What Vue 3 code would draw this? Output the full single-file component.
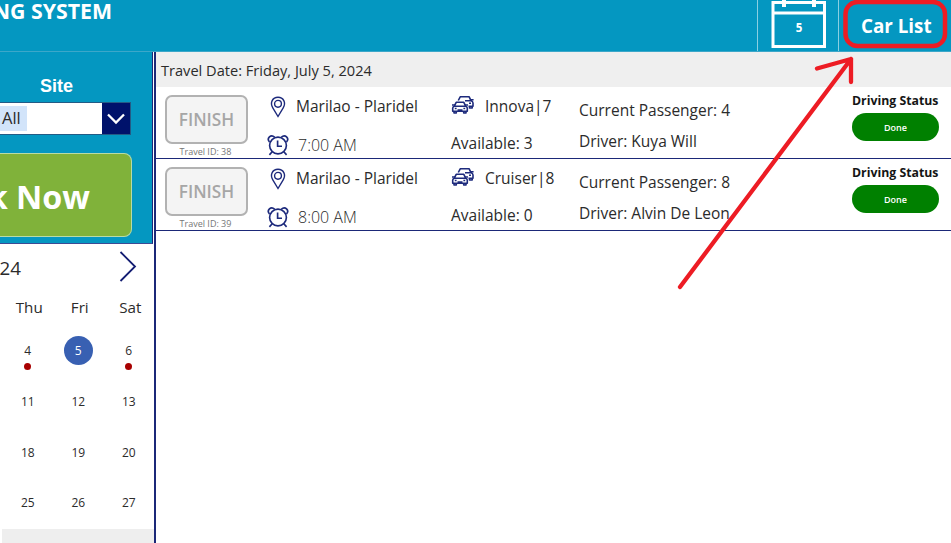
<script setup>
const trips = [
  { id: 38, route: 'Marilao - Plaridel', time: '7:00 AM', car: 'Innova|7', available: 3, passengers: 4, driver: 'Kuya Will' },
  { id: 39, route: 'Marilao - Plaridel', time: '8:00 AM', car: 'Cruiser|8', available: 0, passengers: 8, driver: 'Alvin De Leon' },
]
const weekdays = ['Thu', 'Fri', 'Sat']
const weeks = [[4, 5, 6], [11, 12, 13], [18, 19, 20], [25, 26, 27]]
const marked = [4, 6]
</script>

<template>
  <div class="screen">
    <header class="topbar">
      <h1 class="title">NG SYSTEM</h1>
      <div class="calendar-tab">
        <svg class="calendar-icon" width="56" height="50" viewBox="0 0 56 50">
          <path d="M2 2.500H53.500V46.500H2ZM2 13H53.500" fill="none" stroke="#fff" stroke-width="3" />
          <path d="M13 0V7M43 0V7" stroke="#fff" stroke-width="4" />
        </svg>
        <span class="calendar-day">5</span>
      </div>
      <div class="car-list"><span class="car-list-text">Car List</span></div>
    </header>

    <div class="content">
      <aside class="sidebar">
        <section class="booking">
          <div class="site-label">Site</div>
          <div class="select">
            <div class="select-value"><span class="chip">All</span></div>
            <div class="select-arrow">
              <svg width="20" height="12" viewBox="0 0 20 12"><path d="M2 1.500L10 9.500L18 1.500" fill="none" stroke="#fff" stroke-width="2.300" /></svg>
            </div>
          </div>
          <div class="book"><span class="book-text">k Now</span></div>
        </section>
        <section class="calendar">
          <div class="month">
            <span class="month-text">24</span>
            <svg class="next" width="18" height="32" viewBox="0 0 18 32"><path d="M1.500 2L16 16.500L1.500 31" fill="none" stroke="#131d72" stroke-width="1.800" /></svg>
          </div>
          <div class="weekdays"><span v-for="d in weekdays" :key="d">{{ d }}</span></div>
          <div v-for="(week, i) in weeks" :key="i" class="week">
            <div v-for="d in week" :key="d" class="day">
              <span class="num" :class="{ selected: d === 5 }">{{ d }}</span>
              <i v-if="marked.includes(d)" class="dot"></i>
            </div>
          </div>
          <div class="calendar-end"></div>
        </section>
      </aside>

      <main class="main">
        <div class="date-bar"><span class="date-text">Travel Date: Friday, July 5, 2024</span></div>
        <article v-for="t in trips" :key="t.id" class="trip">
          <div class="finish-col">
            <div class="finish"><span class="finish-text">FINISH</span></div>
            <span class="travel-id">Travel ID: {{ t.id }}</span>
          </div>
          <div class="route-col">
            <div class="line first">
              <svg class="icon" width="22" height="22" viewBox="0 0 22 22" fill="none" stroke="#1d2a7c" stroke-width="1.400">
                <path d="M11 20.500L5.800 11.800C2.700 6.700 5.500 1.200 11 1.200S19.300 6.700 16.200 11.800Z" />
                <circle cx="11" cy="7.800" r="3.400" />
              </svg>
              <span class="route">{{ t.route }}</span>
            </div>
            <div class="line second">
              <svg class="icon clock" width="22" height="22" viewBox="0 0 22 22" fill="none" stroke="#1d2a7c" stroke-width="1.650">
                <circle cx="11" cy="11.500" r="8.400" />
                <path d="M10.600 6.500V12.200H15M5.200 17.800L2.400 20.900M16.800 17.800L19.600 20.900" />
                <path d="M2.500 8C-.8 4.400 3.900-.3 7.600 3.100M19.500 8C22.800 4.400 18.100-.3 14.400 3.100" />
              </svg>
              <span class="time">{{ t.time }}</span>
            </div>
          </div>
          <div class="car-col">
            <div class="line first">
              <svg class="car-icon" width="24" height="20" viewBox="0 0 24 20" fill="none" stroke="#1d2a7c" stroke-width="1.600" stroke-linejoin="round">
                <path d="M3.300 11.200L5.200 7.300H12.800L14.700 11.200M3.300 11.200H14.700Q16.300 11.700 16.300 13.200V16.200H1.700V13.200Q1.700 11.700 3.300 11.200M3 16.200V18H5.300V16.200M12.700 16.200V18H15V16.200M1 10H3.200M14.800 10H17M3.800 13.500H5.600M12.400 13.500H14.200M6.500 15H11.500" />
                <path d="M7.300 5.500L9.200 1.800H18.200L20 5.800Q22 6.400 22 8V11.200H17.500M14 5.800H20M18.500 11.200V13H21.200V11.200M20 4.800H22.600M18 8.200H20" />
              </svg>
              <span class="car">{{ t.car }}</span>
            </div>
            <div class="line second"><span class="available">Available: {{ t.available }}</span></div>
          </div>
          <div class="people-col">
            <div class="people">Current Passenger: {{ t.passengers }}</div>
            <div class="people">Driver: {{ t.driver }}</div>
          </div>
          <div class="status-col">
            <div class="status-title">Driving Status</div>
            <div class="status"><span>Done</span></div>
          </div>
        </article>
      </main>
    </div>

    <svg class="annotation" width="951" height="543" viewBox="0 0 951 543" fill="none" stroke="#ed1c24" stroke-linecap="round" stroke-linejoin="round">
      <rect x="845.500" y="2" width="99.500" height="44" rx="12" stroke-width="4.500" />
      <path d="M680 287L851 59M817 68.500L851 59V82" stroke-width="4.300" />
    </svg>
  </div>
</template>

<style>
body { margin: 0; overflow: hidden; }
</style>

<style scoped>
.screen { position: relative; width: 951px; height: 543px; overflow: hidden; background: #fff; font-family: "Open Sans", "Noto Sans", sans-serif; color: #2b2b2b; white-space: nowrap; }
.screen * { box-sizing: border-box; }
.topbar { display: flex; height: 52px; background: #0497c1; border-bottom: 1px solid #3ca7c9; color: #fff; }
.title { flex: none; display: flex; width: 112px; margin: 0 645px 0 0; justify-content: flex-end; font-size: 21.300px; font-weight: 700; line-height: 22px; }
.calendar-tab { display: grid; flex: none; width: 82px; padding-left: 2px; border-left: 1px solid #8bcfe2; border-right: 1px solid #8bcfe2; justify-items: center; }
.calendar-icon, .calendar-day { grid-area: 1 / 1; }
.calendar-day { padding-top: 20px; font-size: 11.500px; font-weight: 700; line-height: 16px; }
.car-list { width: 112px; padding: 13px 0 0 22px; font-size: 18.800px; font-weight: 700; line-height: 26px; }
.content { display: flex; height: 491px; }
.sidebar { flex: none; width: 156px; border-right: 2px solid #1b2878; }
.booking { width: 153px; height: 192px; padding-top: 23px; background: #0497c1; border-right: 1px solid #1b2878; border-bottom: 1px solid #3c4a95; }
.site-label { padding-left: 40px; color: #fff; font: 700 18px/23px "Liberation Sans", sans-serif; height: 22px; }
.select { display: flex; width: 131px; height: 33px; margin-top: 5px; border: 1px solid #245b85; border-left: 0; background: #fff; }
.select-value { flex: 1; padding-top: 3px; }
.chip { display: block; width: 27px; height: 25px; padding-left: 2px; background: #d2e4fa; font-size: 16.500px; line-height: 24px; }
.select-arrow { display: flex; width: 28px; align-items: center; justify-content: center; background: #00126b; }
.book { display: flex; width: 132px; height: 84px; margin-top: 18px; padding-right: 41px; justify-content: flex-end; border: 1px solid #b9dba5; border-left: 0; border-radius: 0 8px 8px 0; background: #80b23a; color: #fff; font-size: 32.300px; font-weight: 700; line-height: 84px; }
.month { display: flex; height: 46px; padding: 6px 17px 0 0; justify-content: space-between; }
.month-text { width: 21px; display: flex; justify-content: flex-end; padding-top: 5px; font-size: 18.800px; line-height: 26px; }
.weekdays, .week { display: grid; grid-template-columns: repeat(3, 50.500px); padding-left: 2.500px; text-align: center; }
.weekdays { height: 36px; padding-left: 4px; font-size: 15.200px; line-height: 34px; }
.week { height: 50.800px; font-size: 12px; }
.day { display: flex; flex-direction: column; align-items: center; padding-top: 10px; }
.num { width: 29px; height: 29px; border-radius: 50%; line-height: 30px; }
.selected { background: #3860b2; color: #fff; }
.dot { width: 7px; height: 7px; margin-top: -2.500px; border-radius: 50%; background: #a80000; }
.calendar-end { height: 20px; margin-left: 2px; background: #eee; }
.main { flex: 1; }
.date-bar { height: 35px; padding-left: 5px; background: #efefef; font-size: 14.600px; line-height: 36px; }
.trip { display: grid; grid-template-columns: 111px 184px 128px 273px 1fr; height: 72px; border-bottom: 1px solid #1b2878; font-size: 15px; }
.finish-col { display: flex; flex-direction: column; align-items: center; width: 83px; margin-left: 9px; padding-top: 8px; }
.finish { width: 83px; height: 49px; border: 2px solid #b2b2b2; border-radius: 7px; background: #f4f4f4; color: #a6a6a6; font-size: 17.200px; font-weight: 600; line-height: 46px; text-align: center; }
.travel-id { margin-right: 2px; color: #777; font-size: 9px; line-height: 15px; }
.line { display: flex; align-items: center; }
.first { height: 22px; margin-top: 9px; }
.second { height: 22px; margin-top: 16px; }
.route, .time, .car { line-height: 20px; }
.route { margin: -2px 0 0 7px; font-size: 15.500px; }
.time { margin-left: 9px; font-size: 16px; font-weight: 300; }
.car { margin: -3px 0 0 10px; font-size: 15.500px; }
.car-icon { margin-top: -5px; }
.available { margin-top: -4px; font-size: 15.500px; }
.people-col { padding-top: 8px; font-size: 15.500px; }
.people { height: 31px; line-height: 31px; }
.status-col { width: 87px; }
.status-title { padding-top: 5px; color: #151515; font-size: 12.300px; font-weight: 700; line-height: 18px; }
.status { width: 87px; height: 28px; margin-top: 3px; border-radius: 14px; background: #008000; color: #fff; font-size: 9px; font-weight: 600; line-height: 30px; text-align: center; }
.annotation { position: absolute; left: 0; top: 0; }
</style>
